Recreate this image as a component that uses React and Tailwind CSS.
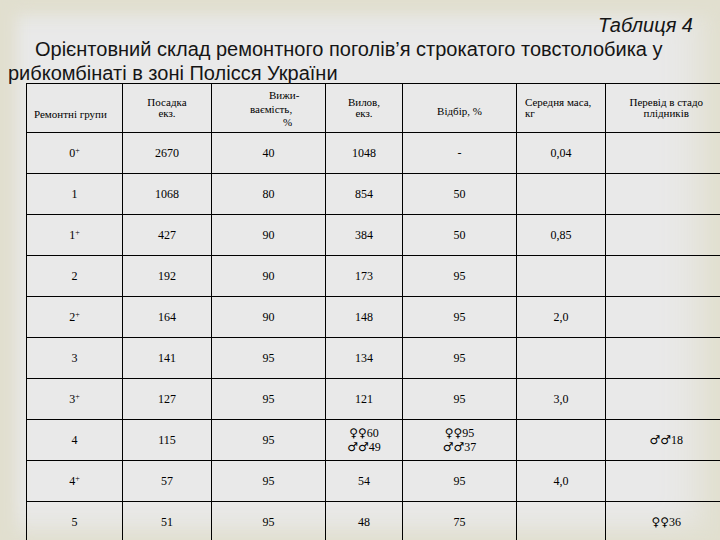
import React from "react";

const F = "♀♀";
const M = "♂♂";

const rows = [
  ["0", "+", "2670", "40", "1048", "-", "0,04", ""],
  ["1", "", "1068", "80", "854", "50", "", ""],
  ["1", "+", "427", "90", "384", "50", "0,85", ""],
  ["2", "", "192", "90", "173", "95", "", ""],
  ["2", "+", "164", "90", "148", "95", "2,0", ""],
  ["3", "", "141", "95", "134", "95", "", ""],
  ["3", "+", "127", "95", "121", "95", "3,0", ""],
  ["4", "", "115", "95", [[F, "60"], [M, "49"]], [[F, "95"], [M, "37"]], "", [[M, "18"]]],
  ["4", "+", "57", "95", "54", "95", "4,0", ""],
  ["5", "", "51", "95", "48", "75", "", [[F, "36"]]],
];

function Sym({ s, n }) {
  return (
    <span className="whitespace-nowrap">
      <span className="font-['DejaVu_Sans',sans-serif] text-[12px]">{s}</span>
      {n}
    </span>
  );
}

function Cell({ v, last }) {
  const cls =
    "border border-black text-center align-middle h-[41px] p-0" +
    (last ? " border-r-0" : "");
  if (Array.isArray(v)) {
    return (
      <td className={cls}>
        <div className="flex flex-col items-center leading-[14px]">
          {v.map((l, i) => (
            <Sym key={i} s={l[0]} n={l[1]} />
          ))}
        </div>
      </td>
    );
  }
  return <td className={cls}>{v}</td>;
}

export default function App() {
  return (
    <div className="relative w-[720px] h-[540px] overflow-hidden bg-[#e9e9e9] shadow-[inset_18px_0_16px_-2px_#e1dfcf,inset_0_16px_16px_-2px_#e1dfcf,inset_-26px_0_40px_-4px_#e1dfcf,inset_0_-12px_30px_-6px_#e1dfcf]">
      <div className="pt-[13px] pl-[8px] pr-[27px] font-['Liberation_Sans',Arial,sans-serif] text-[20px] leading-[24px] text-[#151515]">
        <div className="text-right italic">Таблиця 4</div>
        <div className="pl-[27px] whitespace-nowrap">
          Орієнтовний склад ремонтного поголів’я строкатого товстолобика у
        </div>
        <div className="whitespace-nowrap">рибкомбінаті в зоні Полісся України</div>
      </div>
      <div className="pl-[26px] -mt-[2px]">
        <table className="table-fixed border-collapse w-[700px] font-['Liberation_Serif','Times_New_Roman',serif] text-[12px] text-black">
          <colgroup>
            <col className="w-[96px]" />
            <col className="w-[89px]" />
            <col className="w-[114px]" />
            <col className="w-[77px]" />
            <col className="w-[114px]" />
            <col className="w-[89px]" />
            <col className="w-[121px]" />
          </colgroup>
          <thead>
            <tr className="text-[11px] leading-[11px] font-normal">
              <th className="border border-black h-[49px] p-0 pl-[7px] pb-[12px] align-bottom text-left font-normal whitespace-nowrap">
                Ремонтні групи
              </th>
              <th className="border border-black p-0 pt-[13px] align-top text-center font-normal">
                <div>Посадка</div>
                <div>екз.</div>
              </th>
              <th className="border border-black p-0 align-top text-left font-normal leading-[14px] pt-[4px]">
                <div className="pl-[57px]">Вижи-</div>
                <div className="pl-[38px]">ваємість,</div>
                <div className="pl-[71px] leading-[12px]">%</div>
              </th>
              <th className="border border-black p-0 pt-[13px] align-top text-center font-normal">
                <div>Вилов,</div>
                <div>екз.</div>
              </th>
              <th className="border border-black p-0 pt-[6px] align-middle text-center font-normal">
                Відбір, %
              </th>
              <th className="border border-black p-0 pt-[13px] pl-[8px] align-top text-left font-normal">
                <div className="whitespace-nowrap">Середня маса,</div>
                <div>кг</div>
              </th>
              <th className="border border-black border-r-0 p-0 pt-[13px] align-top text-center font-normal">
                <div className="whitespace-nowrap">Перевід в стадо</div>
                <div>плідників</div>
              </th>
            </tr>
          </thead>
          <tbody>
            {rows.map((r, i) => (
              <tr key={i}>
                <td className="border border-black text-center align-middle h-[41px] p-0">
                  {r[0]}
                  {r[1] && <sup className="text-[8px]">{r[1]}</sup>}
                </td>
                {r.slice(2).map((v, j) => (
                  <Cell key={j} v={v} last={j === 5} />
                ))}
              </tr>
            ))}
          </tbody>
        </table>
      </div>
    </div>
  );
}
